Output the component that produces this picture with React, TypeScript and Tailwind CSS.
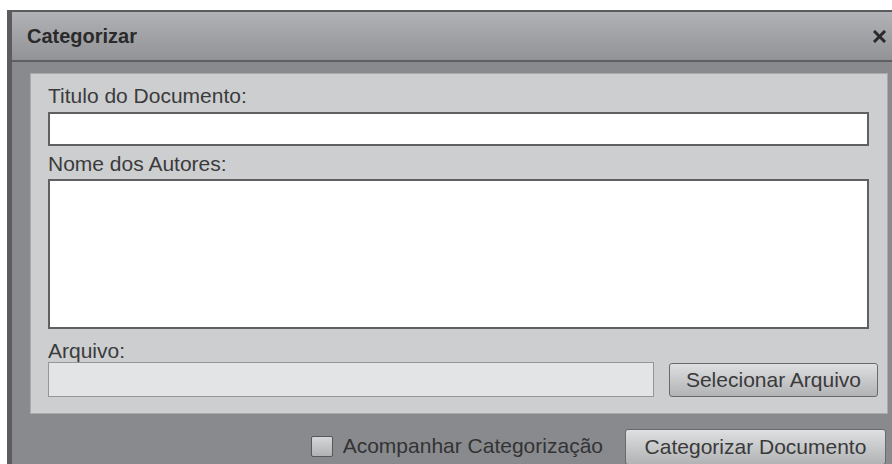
import React from "react";

function CloseIcon() {
  return (
    <svg width="13" height="13" viewBox="0 0 13 13" className="block">
      <path d="M2 2 L11 11 M11 2 L2 11" stroke="#2a2a2a" strokeWidth="3" strokeLinecap="square" />
    </svg>
  );
}

const label = "h-[22px] leading-[22px] text-[21px] text-[#3b3b3c] whitespace-nowrap";
const button =
  "flex items-center justify-center rounded-[3px] border border-[#6a6a6c] bg-gradient-to-b from-[#dedfe1] to-[#b2b3b5] text-[21px] leading-[22px] text-[#3a3a3b] whitespace-nowrap";

export default function App() {
  return (
    <div className="w-[892px] h-[464px] overflow-hidden bg-white pl-[7px] pt-[10px] font-['Liberation_Sans',Arial,sans-serif]">
      <div className="flex flex-col w-[885px] h-[470px] border-l-[5px] border-t-[2px] border-[#5c5c5e] bg-[#898a8e]">
        {/* title bar */}
        <div className="flex items-center justify-between h-[50px] shrink-0 border-b-2 border-[#5e5f61] bg-gradient-to-b from-[#b1b2b5] to-[#929396] pl-[15px] pr-[6px]">
          <span className="text-[20px] font-bold text-[#2a2a2b] leading-none">Categorizar</span>
          <CloseIcon />
        </div>

        {/* body */}
        <div className="flex flex-col pl-[18px] pt-[11px]">
          <div className="w-[858px] border border-[#a9aaac] bg-[#cdced0] pt-[11px] pl-[17px] pb-[16px]">
            <div className={label}>Titulo do Documento:</div>
            <div className="mt-[5px] w-[821px] h-[34px] border-2 border-[#606062] bg-white" />

            <div className={`${label} mt-[7px]`}>Nome dos Autores:</div>
            <div className="mt-[4px] w-[821px] h-[150px] border-2 border-[#606062] bg-white" />

            <div className={`${label} mt-[11px]`}>Arquivo:</div>
            <div className="flex items-center">
              <div className="w-[606px] h-[35px] border border-[#959698] bg-[#e3e4e6]" />
              <div className={`${button} ml-[15px] w-[209px] h-[34px]`}>Selecionar Arquivo</div>
            </div>
          </div>

          {/* footer */}
          <div className="flex justify-end items-start w-[858px] pt-[15px] pr-[2px]">
            <div className="flex items-center mt-[6px] h-[22px]">
              <div className="w-[22px] h-[21px] rounded-[2px] border border-[#57585a] bg-gradient-to-b from-[#d6d7d9] to-[#b0b1b3]" />
              <span className="ml-[10px] text-[21px] leading-[22px] text-[#333334] whitespace-nowrap">
                Acompanhar Categorização
              </span>
            </div>
            <div className={`${button} ml-[22px] w-[261px] h-[36px]`}>Categorizar Documento</div>
          </div>
        </div>
      </div>
    </div>
  );
}
